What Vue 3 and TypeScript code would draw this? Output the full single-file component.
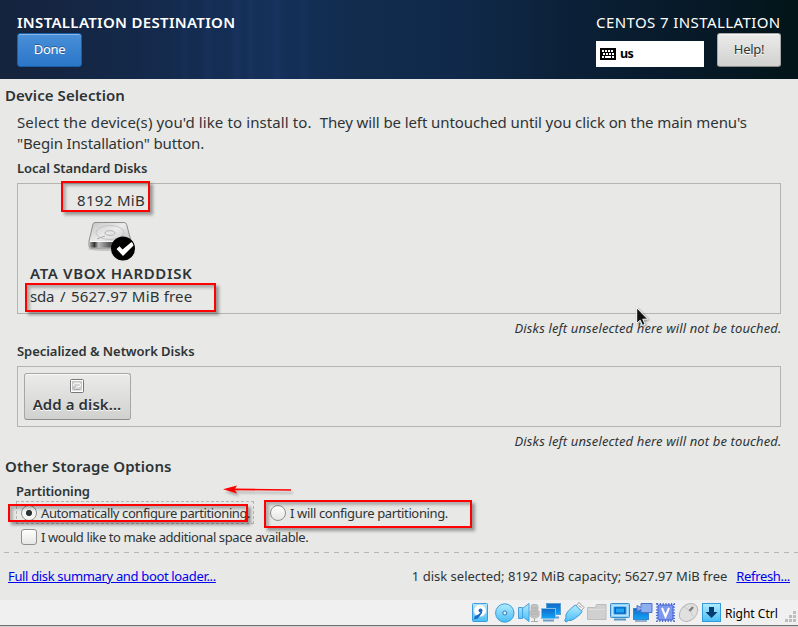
<script setup lang="ts">
interface Box { x: number; y: number; w: number; h: number }

const highlights: Box[] = [
  { x: 61, y: 181, w: 89, h: 31 },
  { x: 25, y: 283, w: 191, h: 29 },
  { x: 8, y: 504, w: 240, h: 18 },
  { x: 264, y: 500, w: 208, h: 28 },
]
const keys = [
  [2, 2], [5, 2], [8, 2], [11, 2],
  [3, 5], [6, 5], [9, 5], [12, 5],
]
</script>

<template>
  <div class="window">
    <header class="header">
      <div class="header-left">
        <h1 class="title">INSTALLATION DESTINATION</h1>
        <button class="btn primary">Done</button>
      </div>
      <div class="header-right">
        <div class="product">CENTOS 7 INSTALLATION</div>
        <div class="tools">
          <div class="keyboard">
            <svg width="16" height="12" viewBox="0 0 16 12" shape-rendering="crispEdges">
              <rect width="16" height="12" rx="1" fill="#000" />
              <rect v-for="(k, i) in keys" :key="i" :x="k[0]" :y="k[1]" width="2" height="2" fill="#fff" />
              <path d="M2 8h2v2H2zM5 8h6v2H5zM12 8h2v2h-2z" fill="#fff" />
            </svg>
            <span>us</span>
          </div>
          <button class="btn help">Help!</button>
        </div>
      </div>
    </header>

    <main class="content">
      <h2 class="section">Device Selection</h2>
      <p class="intro"><span class="intro-start">Select the device(s) you'd like to install to.&nbsp; </span><span class="intro-mid">They will be left untouched until you click on the main menu's</span><br><span class="intro-end">"Begin Installation" button.</span></p>

      <h3 class="sub local">Local Standard Disks</h3>
      <div class="panel disks">
        <div class="disk">
          <span class="capacity">8192 MiB</span>
          <svg class="disk-icon" width="50" height="42" viewBox="0 0 50 42">
            <defs>
              <linearGradient id="top" x1="0" y1="0" x2="1" y2="1">
                <stop offset="0" stop-color="#c4c4c4" />
                <stop offset=".45" stop-color="#ececec" />
                <stop offset="1" stop-color="#b4b4b4" />
              </linearGradient>
              <linearGradient id="front" x1="0" y1="0" x2="1" y2="0">
                <stop offset="0" stop-color="#aaa" />
                <stop offset=".12" stop-color="#333" />
                <stop offset=".22" stop-color="#bbb" />
                <stop offset=".5" stop-color="#555" />
                <stop offset="1" stop-color="#999" />
              </linearGradient>
            </defs>
            <ellipse cx="25" cy="28" rx="22" ry="2" fill="#000" opacity=".15" />
            <path d="M10 1.500h29q2 0 2.600 2L46 20v5q0 2-2 2H6q-2 0-2-2v-5L8 3q.5-1.500 2-1.500z" fill="url(#top)" stroke="#848484" stroke-width=".9" />
            <path d="M4.500 20.500h41v4.200q0 1.800-1.800 1.800H6.300q-1.800 0-1.800-1.800z" fill="url(#front)" />
            <path d="M5 20.500h40" stroke="#f8f8f8" stroke-width="1" />
            <ellipse cx="25" cy="11.500" rx="14" ry="7" fill="none" stroke="#b8b8b8" stroke-width=".7" />
            <ellipse cx="25" cy="12" rx="5" ry="2.300" fill="#e6e6e6" stroke="#a4a4a4" stroke-width=".8" />
            <path d="M12 18l8-3" stroke="#aaa" fill="none" />
            <circle cx="38" cy="27.500" r="12" fill="#000" />
            <path d="M31.500 28l3-2.800 3 3.300 9-7.500q1.800 1.200 2 3.500L38 35z" fill="#fff" />
          </svg>
          <strong class="disk-name">ATA VBOX HARDDISK</strong>
          <div class="free"><span class="dev">sda</span><span class="slash">/</span><span class="amount">5627.97 MiB free</span></div>
        </div>
      </div>
      <p class="note">Disks left unselected here will not be touched.</p>

      <h3 class="sub network">Specialized &amp; Network Disks</h3>
      <div class="panel add-panel">
        <button class="btn add">
          <svg width="14" height="14" viewBox="0 0 14 14">
            <rect x=".5" y=".5" width="13" height="13" rx="1" fill="#e4e4e4" stroke="#777" />
            <rect x="1.500" y="1.500" width="11" height="11" fill="none" stroke="#fff" />
            <rect x="2.500" y="2.500" width="9" height="8" fill="#d2d2d2" stroke="#bdbdbd" stroke-width=".7" />
            <ellipse cx="7" cy="6" rx="3.600" ry="2" fill="none" stroke="#fff" />
            <path d="M3 9l3-2M4 10.500h6" stroke="#aaa" />
          </svg>
          <span>Add a disk…</span>
        </button>
      </div>
      <p class="note">Disks left unselected here will not be touched.</p>

      <h2 class="section other">Other Storage Options</h2>
      <h3 class="sub partition">Partitioning</h3>
      <div class="radios">
        <label class="choice auto"><i class="radio on"></i><span>Automatically configure partitioning.</span></label>
        <label class="choice manual"><i class="radio"></i><span>I will configure partitioning.</span></label>
      </div>
      <label class="choice extra"><i class="check"></i><span>I would like to make additional space available.</span></label>
      <div class="rule"></div>
      <footer class="summary">
        <a class="link">Full disk summary and boot loader...</a>
        <span class="totals">1 disk selected; 8192 MiB capacity; 5627.97 MiB free</span>
        <a class="link">Refresh...</a>
      </footer>
    </main>

    <div class="statusbar">
      <svg width="252" height="22" viewBox="0 0 252 22">
        <defs>
          <linearGradient id="cyan" x1="0" y1="0" x2="0" y2="1">
            <stop offset="0" stop-color="#b4ecff" />
            <stop offset="1" stop-color="#46bdf6" />
          </linearGradient>
          <linearGradient id="blue" x1="0" y1="0" x2="0" y2="1">
            <stop offset="0" stop-color="#1468c8" />
            <stop offset="1" stop-color="#10a6f8" />
          </linearGradient>
        </defs>
        <!-- hard disk -->
        <rect x="2.500" y="1.500" width="15" height="18" rx="1" fill="url(#cyan)" stroke="#3b9be0" />
        <circle cx="10" cy="8.500" r="6.300" fill="#fff" stroke="#9ac8e8" stroke-width=".6" />
        <path d="M12 8.500v2.500l-4 5.500-4 1 .5-3 4.500-2.500z" fill="#1a6cc8" />
        <circle cx="10.500" cy="8.500" r="2" fill="#1a6cc8" />
        <!-- optical -->
        <circle cx="34.800" cy="11" r="9.200" fill="url(#cyan)" stroke="#3c9bd8" />
        <circle cx="34.800" cy="11" r="2" fill="#d8f4ff" stroke="#3978ad" />
        <!-- audio -->
        <rect x="61" y="2.500" width="7" height="12" rx="2" fill="#c4c4c4" stroke="#aaa" stroke-width=".7" />
        <path d="M60 9v3q0 4 4.500 4t4.500-4V9M64.500 16v3M61 19.500h7M62 6h5M62 9h5M62 12h5" fill="none" stroke="#aaa" />
        <path d="M48.500 5.500h4v11h-4zM52.500 6.500l6.500-5v18l-6.500-5z" fill="url(#cyan)" stroke="#4aa0dc" />
        <!-- network -->
        <g stroke="#5a9ed0">
          <rect x="76.500" y="1.500" width="14" height="11" fill="url(#blue)" />
          <path d="M82 15.500h7" stroke="#6d9cc4" stroke-width="2" />
          <rect x="71.500" y="6.500" width="14" height="10" fill="url(#blue)" stroke="#7cc0ea" />
          <path d="M73 18.500h11" stroke="#6d9cc4" stroke-width="2" />
        </g>
        <!-- usb -->
        <path d="M106 4l3-3.500 5 5-3 3.500z" fill="#f5f5f5" stroke="#999" />
        <path d="M109 3.500l2 2" stroke="#777" />
        <path d="M102.500 5l3-2 6.500 6.500-2 3-6 4.500q-3 2-5.500 1.500l-2.500 1.500-1.500-1.500 1.500-2.500q-1-3 1.500-6z" fill="url(#cyan)" stroke="#3c98d6" />
        <!-- shared folders -->
        <path d="M117.500 5.500h8l1-3h9.500v15h-18.500z" fill="#d0d0d0" stroke="#bcbcbc" />
        <path d="M118 7.500h17.500" stroke="#dedede" />
        <!-- display -->
        <rect x="140.500" y="1.500" width="19" height="14" rx="1" fill="#8fd4fa" stroke="#3a8cc8" />
        <rect x="143" y="4" width="14" height="9" fill="#0f86e4" stroke="#e5f8ff" />
        <rect x="145.500" y="6" width="9" height="5" fill="#22a4f4" stroke="#0c62b4" />
        <path d="M144 17.500h12" stroke="#5a94c0" stroke-width="2" />
        <!-- recording -->
        <rect x="163.500" y="6.500" width="15" height="11" fill="url(#blue)" stroke="#3c84c8" />
        <path d="M165 19h12" stroke="#6d9cc4" stroke-width="1.500" />
        <path d="M167 3.500l4 2v-4h11v9h-11v-3l-4 2z" fill="#8eaef0" stroke="#4c74c8" />
        <!-- processor -->
        <rect x="187" y="2" width="17" height="17" fill="none" stroke="#5470d4" stroke-width="2" stroke-dasharray="1.200 1.600" />
        <rect x="188" y="3" width="15" height="15" rx="1" fill="#7e98f0" stroke="#4060d0" />
        <path d="M192 6l3.500 8.500 3.500-8.500" fill="none" stroke="#fff" stroke-width="2" />
        <!-- mouse -->
        <ellipse cx="218.500" cy="10.500" rx="10.300" ry="7.700" transform="rotate(-43 218.500 10.500)" fill="#e0e0e0" stroke="#b8b8b8" />
        <path d="M213 5q6 1 10 9" fill="none" stroke="#c8c8c8" />
        <path d="M219.500 9l3.500-4" stroke="#808080" stroke-width="2.500" />
        <!-- host key -->
        <rect x="232.500" y="1.500" width="18" height="18" fill="url(#cyan)" stroke="#319bdc" />
        <path d="M239 5h5v5h3.500l-6 6-6-6h3.500z" fill="#063c73" />
      </svg>
      <span class="hostkey">Right Ctrl</span>
      <svg class="grip" width="11" height="12" viewBox="0 0 11 12" fill="#bdbdbd">
        <path d="M8 0h3v3H8zM4 4h3v3H4zM8 4h3v3H8zM0 8h3v3H0zM4 8h3v3H4zM8 8h3v3H8z" />
      </svg>
    </div>
    <div class="edge"></div>

    <div
      v-for="(b, i) in highlights" :key="i" class="highlight"
      :style="{ left: b.x + 'px', top: b.y + 'px', width: b.w + 'px', height: b.h + 'px' }"
    ></div>
    <svg class="arrow" width="72" height="14" viewBox="0 0 72 14">
      <path d="M10 6.300L68 7" stroke="#f00" stroke-width="1.700" />
      <path d="M0 6.300L14 2.500 11.500 6.500 14 10.500z" fill="#f00" />
    </svg>
    <svg class="cursor" width="14" height="20" viewBox="0 0 14 20">
      <path d="M.7.8v15.500l3.500-3.100 2.300 5.200 2.600-1.100-2.300-5.100h5z" fill="#111" stroke="#fff" />
    </svg>
  </div>
</template>

<style>
body { margin: 0; }
</style>

<style scoped>
.window {
  position: relative;
  display: flex;
  flex-direction: column;
  width: 798px;
  height: 627px;
  overflow: hidden;
  background: #e8e8e6;
  color: #2e3436;
  font: 15px/21px 'Noto Sans', sans-serif;
  white-space: nowrap;
}
h1, h2, h3, p { margin: 0; font-size: 15px; font-weight: 600; }

.header {
  display: flex;
  justify-content: space-between;
  box-sizing: border-box;
  flex: none;
  height: 79px;
  padding: 12px 17px 0;
  color: #fff;
  background:
    linear-gradient(90deg, transparent 180px, rgba(60, 100, 180, .06) 184px, transparent 190px 202px, rgba(60, 100, 180, .07) 208px, transparent 214px 230px, rgba(60, 100, 180, .08) 237px, transparent 243px 246px, rgba(60, 100, 180, .07) 250px, transparent 256px 272px, rgba(60, 100, 180, .07) 277px, transparent 283px 298px, rgba(60, 100, 180, .05) 304px, transparent 310px),
    linear-gradient(90deg, #15233d 0, #142848 15%, #15305a 34%, #112c4d 45%, #10294a 58%, #0c2139 70%, #071a2a 85%, #031519 100%);
}
.title { letter-spacing: .32px; }
.product { margin-left: -1px; letter-spacing: .41px; }
.tools { display: flex; justify-content: space-between; width: 185px; margin-left: -1px; }
.header-right { width: 184px; }
.keyboard {
  display: flex;
  align-items: center;
  gap: 4px;
  box-sizing: border-box;
  width: 108px;
  height: 26px;
  margin-top: 8px;
  padding: 0 0 1px 4px;
  background: #fff;
  color: #000;
  font-size: 12.500px;
  font-weight: 700;
  letter-spacing: -.7px;
}
.btn {
  box-sizing: border-box;
  height: 34px;
  padding: 0 0 2px;
  border: 1px solid #a7a7a3;
  border-bottom-color: #8d8d88;
  border-radius: 3px;
  background: linear-gradient(#ebebea, #d1d1cf);
  box-shadow: inset 0 1px #f8f8f8;
  color: #2e3436;
  font: 13px/20px 'Noto Sans', sans-serif;
}
.primary {
  display: block;
  width: 65px;
  border-color: #1b5fa8;
  background: linear-gradient(#4a90d9, #2a76c8);
  box-shadow: inset 0 1px #8ab8e8;
  color: #fff;
  text-shadow: 0 -1px rgba(0, 0, 0, .35);
  letter-spacing: -.35px;
}
.help { width: 64px; letter-spacing: -.3px; text-shadow: 0 1px #fff; }

.content { display: flex; flex-direction: column; height: 521px; }
.section { margin: 6px 0 0 5px; letter-spacing: .07px; }
.intro { height: 42px; margin: 6px 0 0 17px; font-weight: 400; }
.intro-start { letter-spacing: .11px; }
.intro-mid { letter-spacing: -.09px; }
.intro-end { letter-spacing: -.15px; }
.sub { height: 20px; margin-left: 17px; font-size: 13px; line-height: 20px; }
.local { margin-top: 4px; letter-spacing: -.03px; }
.panel { box-sizing: border-box; margin: 5px 17px 0; border: 1px solid #b4b4b0; }
.disks { display: flex; height: 131px; padding: 6px 12px; }
.disk { display: flex; flex-direction: column; align-items: flex-start; width: 163px; }
.capacity { margin-left: 47px; letter-spacing: .34px; }
.disk-icon { margin: 10px 0 0 55px; }
.disk-name { font-weight: 600; letter-spacing: .65px; }
.free { display: flex; margin-top: 2px; }
.dev { width: 30px; letter-spacing: -.2px; }
.slash { width: 11px; }
.amount { letter-spacing: .18px; }
.note {
  height: 20px;
  margin: 4px 16.500px 0 0;
  font-size: 13px;
  font-style: italic;
  font-weight: 400;
  line-height: 20px;
  letter-spacing: .13px;
  text-align: right;
}
.network { margin-top: 3px; letter-spacing: -.05px; }
.add-panel { height: 61px; padding: 6px; }
.add {
  display: flex;
  flex-direction: column;
  align-items: center;
  width: 107px;
  height: 47px;
  padding: 5px 1px 0 0;
  font-size: 15px;
  font-weight: 600;
  line-height: 21px;
  letter-spacing: .08px;
  text-shadow: 0 1px #fff;
}
.add span { margin-top: 1px; }
.other { margin-top: 5px; }
.partition { margin: 4px 0 0 16px; letter-spacing: -.15px; }
.radios { display: flex; gap: 16px; margin: 0 0 0 16px; }
.choice { display: flex; align-items: center; box-sizing: border-box; gap: 4px; font-size: 13px; line-height: 20px; letter-spacing: -.4px; }
.auto { width: 238px; height: 23px; padding-left: 4px; border: 1px dashed #b5b5b1; }
.manual { height: 23px; letter-spacing: -.36px; }
.radio, .check { flex: none; box-sizing: border-box; width: 16px; height: 16px; border: 1px solid #8f8f8b; background: linear-gradient(#fff, #e6e6e4); }
.radio { border-radius: 50%; }
.on { background: radial-gradient(circle, #2e3436 0 2.700px, #f5f5f4 3.500px); }
.check { border-radius: 3px; }
.extra { height: 20px; margin: 3px 0 0 21px; }
.rule { height: 1px; margin-top: 5px; background: repeating-linear-gradient(90deg, transparent 0 4px, #b6b6b2 4px 9px, transparent 9px 10px); }
.summary { display: flex; margin: 13px 8px 0; font-size: 13px; line-height: 20px; }
.link { color: #00e; text-decoration: underline; letter-spacing: -.34px; }
.totals { margin: 0 9px 0 auto; }

.statusbar { display: flex; box-sizing: border-box; height: 25px; padding: 2px 2px 0 470px; background: #f0f0f0; color: #000; font-size: 12px; line-height: 24px; }
.hostkey { margin-left: 3px; }
.grip { margin: 9px 0 0 auto; }
.edge { height: 1px; border-top: 1px solid #707070; background: #d0d0d0; }

.highlight { position: absolute; box-sizing: border-box; border: 2px solid #f00; box-shadow: 3px 3px 3px rgba(0, 0, 0, .35), inset 3px 3px 3px rgba(0, 0, 0, .25); }
.arrow { position: absolute; left: 223px; top: 483px; filter: drop-shadow(2px 3px 1px rgba(0, 0, 0, .25)); }
.cursor { position: absolute; left: 636px; top: 307px; filter: drop-shadow(1px 1px 1px rgba(0, 0, 0, .4)); }
</style>
